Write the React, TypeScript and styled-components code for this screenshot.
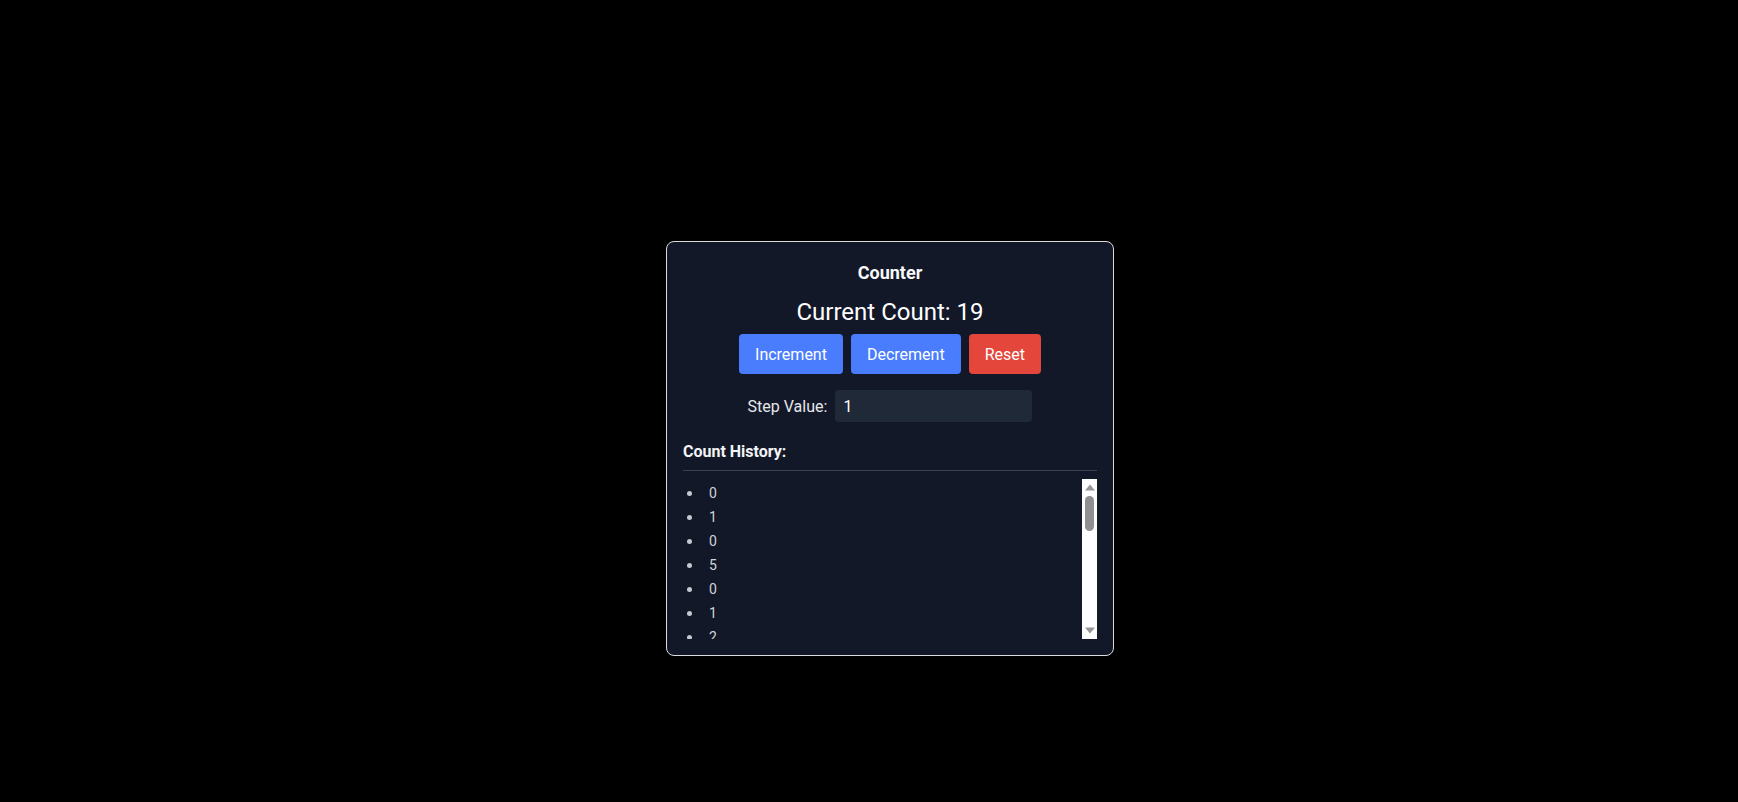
import { useState } from "react";
import styled, { createGlobalStyle } from "styled-components";

const GlobalStyle = createGlobalStyle`
  html, body {
    margin: 0;
    padding: 0;
    background: #000;
  }
  body {
    font-family: Roboto, "Noto Sans", sans-serif;
    color: #f3f4f6;
  }
  * {
    box-sizing: border-box;
  }
`;

const Page = styled.div`
  min-height: 100vh;
  display: flex;
  justify-content: center;
  align-items: flex-start;
  padding: 241px 0 0 42px;
`;

const Card = styled.div`
  width: 448px;
  padding: 17px 16px 16px;
  border: 1px solid #dcdcdc;
  border-radius: 8px;
  background: #121828;
  display: flex;
  flex-direction: column;
`;

const Title = styled.h1`
  margin: 0 0 9px;
  font-size: 18px;
  line-height: 28px;
  font-weight: 700;
  text-align: center;
  color: #f9fafb;
`;

const CountText = styled.p`
  margin: 0 0 6px;
  font-size: 24px;
  line-height: 32px;
  text-align: center;
  color: #fff;
`;

const ButtonRow = styled.div`
  display: flex;
  justify-content: center;
  gap: 8px;
`;

const ActionButton = styled.button<{ $tone: "blue" | "red" }>`
  height: 40px;
  padding: 0 16px;
  border: none;
  border-radius: 4px;
  font-family: inherit;
  font-size: 16px;
  color: #fff;
  cursor: pointer;
  background: ${(p) => (p.$tone === "red" ? "#e4463b" : "#497dfd")};
`;

const StepRow = styled.label`
  margin-top: 16px;
  display: flex;
  justify-content: center;
  align-items: center;
  gap: 8px;
  font-size: 16px;
  color: #e5e7eb;
`;

const StepInput = styled.input`
  width: 197px;
  height: 32px;
  padding: 0 8px;
  border: none;
  border-radius: 4px;
  background: #1f2937;
  color: #fff;
  font-family: inherit;
  font-size: 16px;
  outline: none;
  -moz-appearance: textfield;

  &::-webkit-inner-spin-button,
  &::-webkit-outer-spin-button {
    -webkit-appearance: none;
    margin: 0;
  }
`;

const HistoryHeading = styled.h2`
  margin: 18px 0 0;
  padding-bottom: 6px;
  border-bottom: 1px solid #3a4150;
  font-size: 16px;
  line-height: 24px;
  font-weight: 700;
  color: #f3f4f6;
`;

const HistoryBox = styled.div`
  margin-top: 8px;
  height: 160px;
  display: flex;
`;

const HistoryList = styled.ul`
  flex: 1;
  margin: 0;
  padding: 2px 0 0;
  list-style: none;
  overflow-y: auto;
  scrollbar-width: none;

  &::-webkit-scrollbar {
    display: none;
  }
`;

const HistoryItem = styled.li`
  display: flex;
  align-items: center;
  height: 24px;
  padding-left: 4px;
  font-size: 14px;
  color: #d1d5db;

  &::before {
    content: "";
    width: 5px;
    height: 5px;
    border-radius: 50%;
    background: #c4c8d0;
    margin-right: 17px;
  }
`;

const ScrollTrack = styled.div`
  width: 15px;
  background: #fdfdfd;
  display: flex;
  flex-direction: column;
`;

const ScrollArrow = styled.div`
  height: 17px;
  display: flex;
  align-items: center;
  justify-content: center;
`;

const ThumbArea = styled.div`
  flex: 1;
  position: relative;
`;

const Thumb = styled.div`
  position: absolute;
  left: 3px;
  right: 3px;
  border-radius: 5px;
  background: #8f8f8f;
`;

const Arrow = ({ down }: { down?: boolean }) => (
  <svg width="10" height="7" viewBox="0 0 10 7">
    <path d={down ? "M0 0.5 L10 0.5 L5 6.5 Z" : "M0 6.5 L10 6.5 L5 0.5 Z"} fill="#979797" />
  </svg>
);

const initialHistory = [0, 1, 0, 5, 0, ...Array.from({ length: 19 }, (_, i) => i + 1)];

const App = () => {
  const [count, setCount] = useState(19);
  const [step, setStep] = useState("1");
  const [history, setHistory] = useState<number[]>(initialHistory);
  const [scrollTop, setScrollTop] = useState(0);

  const stepNum = Number(step) || 0;
  const update = (next: number) => {
    setCount(next);
    setHistory((prev) => [...prev, next]);
  };

  const viewH = 160;
  const trackH = viewH - 34;
  const contentH = Math.max(history.length * 24 + 2, viewH);
  const thumbH = Math.max(20, (viewH / contentH) * trackH);
  const maxScroll = contentH - viewH;
  const thumbTop = maxScroll > 0 ? (scrollTop / maxScroll) * (trackH - thumbH) : 0;

  return (
    <>
      <GlobalStyle />
      <Page>
        <Card>
          <Title>Counter</Title>
          <CountText>Current Count: {count}</CountText>
          <ButtonRow>
            <ActionButton $tone="blue" onClick={() => update(count + stepNum)}>
              Increment
            </ActionButton>
            <ActionButton $tone="blue" onClick={() => update(count - stepNum)}>
              Decrement
            </ActionButton>
            <ActionButton $tone="red" onClick={() => update(0)}>
              Reset
            </ActionButton>
          </ButtonRow>
          <StepRow>
            Step Value:
            <StepInput
              type="number"
              value={step}
              onChange={(e) => setStep(e.target.value)}
            />
          </StepRow>
          <HistoryHeading>Count History:</HistoryHeading>
          <HistoryBox>
            <HistoryList onScroll={(e) => setScrollTop(e.currentTarget.scrollTop)}>
              {history.map((value, i) => (
                <HistoryItem key={i}>{value}</HistoryItem>
              ))}
            </HistoryList>
            <ScrollTrack>
              <ScrollArrow>
                <Arrow />
              </ScrollArrow>
              <ThumbArea>
                <Thumb style={{ top: thumbTop, height: thumbH }} />
              </ThumbArea>
              <ScrollArrow>
                <Arrow down />
              </ScrollArrow>
            </ScrollTrack>
          </HistoryBox>
        </Card>
      </Page>
    </>
  );
};

export default App;
